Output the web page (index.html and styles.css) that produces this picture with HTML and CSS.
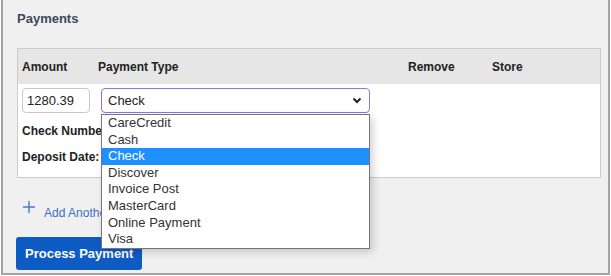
FILE: index.html
```html
<!DOCTYPE html>
<html lang="en">
<head>
  <meta charset="UTF-8">
  <title>Payments</title>
  <link rel="stylesheet" href="styles.css">
</head>
<body>
  <div class="panel">
    <h3 class="panel-title">Payments</h3>
    <div class="pay-table">
      <div class="pay-head">
        <span class="col-amount">Amount</span>
        <span class="col-type">Payment Type</span>
        <span class="col-remove">Remove</span>
        <span class="col-store">Store</span>
      </div>
      <div class="pay-body">
        <div class="pay-row">
          <input class="amount-input" type="text" value="1280.39">
          <div class="select-wrap">
            <div class="select-box">
              <span>Check</span>
              <svg class="chevron" width="10" height="7" viewBox="0 0 10 7"><path d="M1.5 1.5 L5 5 L8.5 1.5" fill="none" stroke="#222" stroke-width="2"/></svg>
            </div>
            <ul class="select-list">
              <li>CareCredit</li>
              <li>Cash</li>
              <li class="selected">Check</li>
              <li>Discover</li>
              <li>Invoice Post</li>
              <li>MasterCard</li>
              <li>Online Payment</li>
              <li>Visa</li>
            </ul>
          </div>
        </div>
        <div class="field-label">Check Number:</div>
        <div class="field-label">Deposit Date:</div>
      </div>
    </div>
    <a class="add-link" href="#">
      <svg width="12" height="12" viewBox="0 0 12 12"><path d="M6 0 V12 M0 6 H12" stroke="#4a78c2" stroke-width="1.4"/></svg>
      <span>Add Another Payment</span>
    </a>
    <button class="process-btn">Process Payment</button>
  </div>
</body>
</html>
```

FILE: styles.css
```css
body {
  margin: 0;
  padding: 0 1px 1px 1px;
  font-family: "Liberation Sans", Arial, sans-serif;
  background: #fff;
}
.panel {
  height: 275px;
  box-sizing: border-box;
  border: 2px solid #a3a3a3;
  border-top: none;
  background: #f0f0f0;
  padding: 0 7px 0 14px;
}
.panel-title {
  margin: 0;
  padding-top: 11px;
  height: 48px;
  box-sizing: border-box;
  font-size: 13px;
  font-weight: bold;
  color: #3b4a5a;
}
.pay-table {
  border: 1px solid #cbcbcb;
  background: #fff;
}
.pay-head {
  display: flex;
  align-items: center;
  height: 35px;
  background: #e6e6e6;
  font-size: 12px;
  font-weight: bold;
  color: #222;
  padding-left: 4px;
}
.col-amount { width: 76px; }
.col-type { width: 310px; }
.col-remove { width: 84px; }
.pay-body {
  padding: 4px 0 0 4px;
  height: 93px;
  box-sizing: border-box;
}
.pay-row {
  display: flex;
  gap: 11px;
  height: 25px;
}
.amount-input {
  width: 68px;
  height: 25px;
  box-sizing: border-box;
  border: 1px solid #c8c8c8;
  border-radius: 4px;
  padding: 0 4px;
  font-family: inherit;
  font-size: 13px;
  color: #222;
}
.select-wrap {
  position: relative;
  width: 269px;
}
.select-box {
  display: flex;
  align-items: center;
  justify-content: space-between;
  height: 25px;
  box-sizing: border-box;
  border: 1px solid #8f73e6;
  border-radius: 4px;
  padding: 0 7px 0 6px;
  font-size: 13px;
  color: #222;
}
.select-list {
  position: absolute;
  top: 26px;
  left: 0;
  width: 269px;
  box-sizing: border-box;
  margin: 0;
  padding: 0;
  list-style: none;
  background: #fff;
  border: 1px solid #767676;
  box-shadow: 3px 3px 8px rgba(0, 0, 0, 0.18);
  font-size: 13px;
  color: #333;
  z-index: 2;
}
.select-list li {
  height: 16.6px;
  line-height: 16.6px;
  padding-left: 6px;
}
.select-list li.selected {
  background: #1e90ff;
  color: #fff;
}
.field-label {
  font-size: 12px;
  font-weight: bold;
  color: #222;
  margin-top: 11px;
  height: 15px;
}
.add-link {
  display: flex;
  align-items: flex-start;
  gap: 9px;
  margin: 17px 0 0 6px;
  height: 24px;
  font-size: 12px;
  line-height: 14px;
  color: #3d6fc4;
  text-decoration: none;
}
.add-link svg { margin-top: 6px; }
.add-link span { margin-top: 11px; }
.process-btn {
  display: block;
  margin-top: 18px;
  margin-left: -1px;
  height: 33px;
  padding: 0 9px;
  border: none;
  border-radius: 3px;
  background: #0f5bc4;
  color: #fff;
  font-family: inherit;
  font-size: 13px;
  font-weight: bold;
}
```
